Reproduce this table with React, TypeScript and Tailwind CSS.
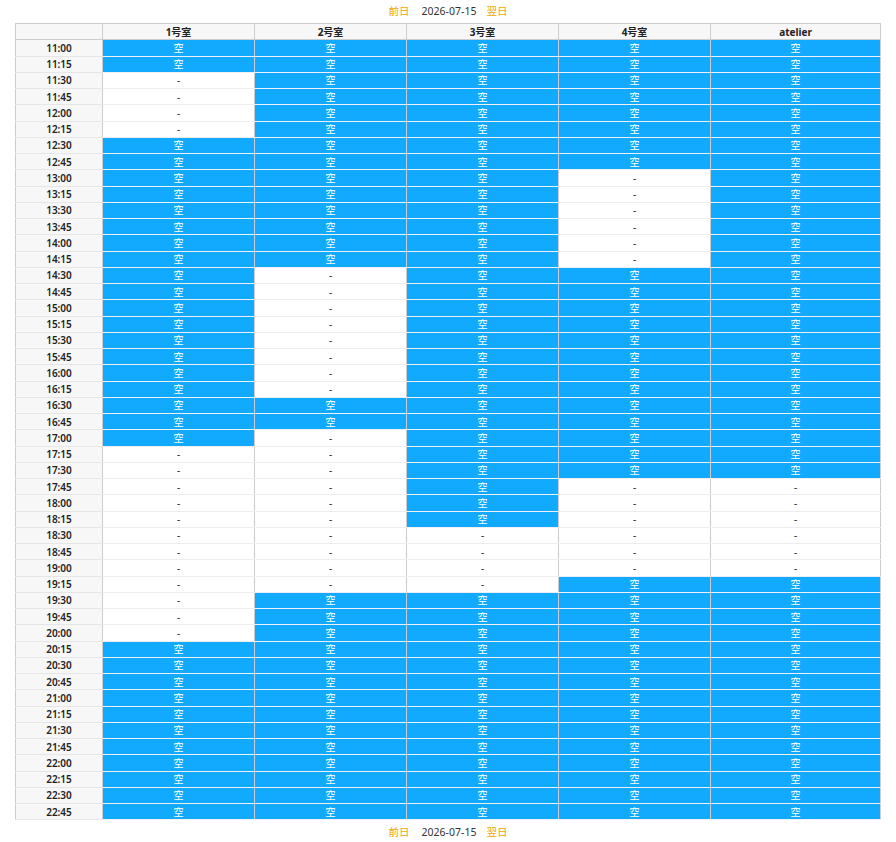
import React from "react";

const times: string[] = [];
for (let h = 11; h <= 22; h++) {
  for (const m of ["00", "15", "30", "45"]) times.push(`${h}:${m}`);
}
const idx = (t: string) => times.indexOf(t);

// ranges of "-" (unavailable) for each column, inclusive
const busy: [string, string][][] = [
  [["11:30", "12:15"], ["17:15", "20:00"]],
  [["14:30", "16:15"], ["17:00", "19:15"]],
  [["18:30", "19:15"]],
  [["13:00", "14:15"], ["17:45", "19:00"]],
  [["17:45", "19:00"]],
];

const isFree = (col: number, row: number) =>
  !busy[col].some(([a, b]) => row >= idx(a) && row <= idx(b));

const rooms = ["1号室", "2号室", "3号室", "4号室", "atelier"];

function Nav() {
  return (
    <div className="h-[23px] flex items-center justify-center text-[10.5px] leading-none">
      <span className="text-[#f0a500] cursor-pointer">前日</span>
      <span className="text-[#333] ml-[12px]">2026-07-15</span>
      <span className="text-[#f0a500] cursor-pointer ml-[10px]">翌日</span>
    </div>
  );
}

export default function App() {
  return (
    <div className="px-[15px] bg-white font-['Noto_Sans','Noto_Sans_CJK_JP',sans-serif] text-[#222]">
      <Nav />
      <table className="w-full table-fixed border-collapse border border-[#cccccc] text-[10px] leading-none">
        <colgroup>
          <col className="w-[87px]" />
          <col className="w-[152px]" />
          <col className="w-[152px]" />
          <col className="w-[152px]" />
          <col className="w-[152px]" />
          <col />
        </colgroup>
        <thead>
          <tr className="h-[16.25px]">
            <th className="bg-[#f7f7f7] border border-[#cccccc] p-0"></th>
            {rooms.map((r) => (
              <th
                key={r}
                className="bg-[#f7f7f7] border border-[#cccccc] p-0 font-bold text-center text-[#222]"
              >
                {r}
              </th>
            ))}
          </tr>
        </thead>
        <tbody>
          {times.map((t, row) => (
            <tr key={t} className="h-[16.25px]">
              <td className="bg-[#f7f7f7] border-y border-y-[#e6e6e6] border-x border-x-[#cccccc] p-0 text-center font-semibold text-[#222]">
                {t}
              </td>
              {rooms.map((r, col) => {
                const free = isFree(col, row);
                return (
                  <td
                    key={r}
                    className={
                      free
                        ? "bg-[#12aafe] text-white border-y border-y-[#f0f0f0] border-x border-x-[#cccccc] p-0 text-center"
                        : "bg-white text-[#222] border-y border-y-[#eeeeee] border-x border-x-[#cccccc] p-0 text-center"
                    }
                  >
                    {free ? "空" : "-"}
                  </td>
                );
              })}
            </tr>
          ))}
        </tbody>
      </table>
      <Nav />
    </div>
  );
}
